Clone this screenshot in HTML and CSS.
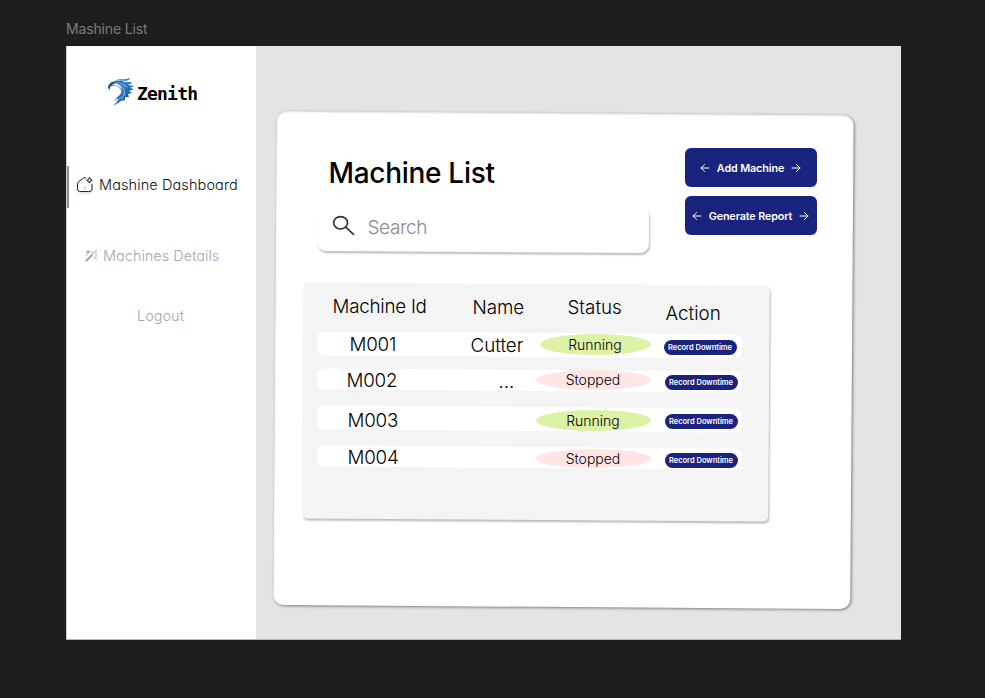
FILE: index.html
```html
<!DOCTYPE html>
<html lang="en">
<head>
<meta charset="utf-8">
<title>Mashine List</title>
<link rel="stylesheet" href="styles.css">
</head>
<body>
<div class="frame-label">Mashine List</div>
<div class="frame">
  <aside class="sidebar">
    <div class="logo">
      <svg class="bird" viewBox="0 0 28 29">
        <defs><linearGradient id="feather" x1="0" y1="0" x2="1" y2="1"><stop offset="0" stop-color="#12385f"/><stop offset=".45" stop-color="#2f80cc"/><stop offset="1" stop-color="#0b2f7c"/></linearGradient></defs>
        <path fill="url(#feather)" d="M1 10C1 6 4 4 8 3C13 0 18 2 23 0C22 3 18 3 15 4C19 5 23 3 25 5C24 6 22 6 21 7L27 8L23 10L27 11L22 13L25 15L21 16L22 19L18 19L18 22L14 23L11 25L6 28C9 25 11 22 11 20L7 23C10 18 16 16 14 12C12 9 9 7 5 8C3 8 3 10 3 12Z"/>
        <path fill="none" stroke="#d8efff" stroke-width=".5" d="M8 5C13 4 17 7 20 9M12 7C17 9 18 12 17 17M14 22L18 15M9 25L14 19"/>
        <path fill="none" stroke="#b8e4ff" stroke-width=".8" d="M9 3Q14 2 19 2"/>
        <path fill="#e4f4ff" d="M5 7Q8 4.500 12 6.500Q15 9 15 12Q12 7.500 5 7Z"/>
      </svg>
      <span class="brand">Zenith</span>
    </div>
    <nav class="nav">
      <a class="item active">
        <svg class="home" viewBox="0 0 18 18"><path d="M10 2.2C8.6 1.3 7.8 1.7 6.7 2.5L3 5.4C1.8 6.4 1.5 7.3 1.5 8.6V12.4C1.5 14.7 2.6 15.6 4.7 15.6H12.6C15 15.6 16 14.5 16 12.4V8.5"/><path stroke="#bbb" d="M9 10.5V12.5"/><path d="M13.5 1.500Q13.700 4 16.2 4.3Q13.8 4.6 13.5 7Q13.1 4.6 10.8 4.3Q13.1 4 13.5 1.500Z"/></svg>
        <span>Mashine Dashboard</span>
      </a>
      <a class="item details">
        <svg class="wand" viewBox="0 0 13 13"><path stroke-width="2.200" d="M1.5 11.5L7 6"/><path stroke-width="1.3" d="M3 1.500V4.4M1.500 3H4.500"/><path stroke="#c9cbd1" stroke-width="1.500" d="M7.5 5.5L11.5 1.5M6 2.5L8 4M11 4.5V7.5M9 8L11.500 10.500M1 6H2"/></svg>
        <span>Machines Details</span>
      </a>
      <a class="item logout"><span>Logout</span></a>
    </nav>
  </aside>
  <main class="main">
    <section class="card">
      <header class="head">
        <div class="head-left">
          <h1>Machine List</h1>
          <div class="search">
            <svg viewBox="0 0 24 22"><ellipse cx="8.6" cy="7.8" rx="7" ry="6.2"/><path d="M13.8 12.2L21.500 19.4"/></svg>
            <span>Search</span>
          </div>
        </div>
        <div class="buttons">
          <button class="btn"><svg viewBox="0 0 10 10"><path d="M9 5H1M4.6 1.4L1 5L4.6 8.6"/></svg><span>Add Machine</span><svg viewBox="0 0 10 10"><path d="M1 5H9M5.4 1.4L9 5L5.4 8.6"/></svg></button>
          <button class="btn"><svg viewBox="0 0 10 10"><path d="M9 5H1M4.6 1.4L1 5L4.6 8.6"/></svg><span>Generate Report</span><svg viewBox="0 0 10 10"><path d="M1 5H9M5.4 1.4L9 5L5.4 8.6"/></svg></button>
        </div>
      </header>
      <section class="table">
        <div class="row titles"><span class="id">Machine Id</span><span class="name">Name</span><span class="col-status">Status</span><span class="col-action">Action</span></div>
        <div class="row r1"><span class="id">M001</span><span class="name">Cutter</span><span class="status running">Running</span><button class="record">Record Downtime</button></div>
        <div class="row r2"><span class="id">M002</span><span class="name">...</span><span class="status stopped">Stopped</span><button class="record">Record Downtime</button></div>
        <div class="row r3"><span class="id">M003</span><span class="name"></span><span class="status running">Running</span><button class="record">Record Downtime</button></div>
        <div class="row r4"><span class="id">M004</span><span class="name"></span><span class="status stopped">Stopped</span><button class="record">Record Downtime</button></div>
      </section>
    </section>
  </main>
</div>
</body>
</html>
```

FILE: styles.css
```css
* { box-sizing: border-box; }
body {
  margin: 0;
  padding: 20px 84px 58px 66px;
  height: 698px;
  overflow: hidden;
  background: #1e1e1e;
  font-family: Inter, "Liberation Sans", sans-serif;
  color: #000;
}
svg { flex: none; fill: none; stroke: currentColor; stroke-linecap: round; stroke-linejoin: round; }
button { border: 0; padding: 0; font-family: inherit; color: #fff; background: #1a237e; }
.frame-label { height: 26px; line-height: 18px; font-size: 14px; letter-spacing: -.15px; color: #7b7b7b; }
.frame { display: flex; width: 835px; height: 594px; background: #e4e4e4; border: solid #b5b5b5; border-width: 0 0 1px; }
.sidebar { width: 190px; background: #fff; border-left: 1px solid #ccc; }

.logo { display: flex; height: 120px; padding: 32px 0 0 40px; }
.bird { width: 28px; height: 29px; stroke: none; }
.brand { margin: 3px 0 0 2px; font: bold 18px/26px "DejaVu Sans Mono", monospace; letter-spacing: -.8px; }

.nav { display: flex; flex-direction: column; font-weight: 300; font-feature-settings: "cv11"; color: #a4a7b0; }
.item { display: flex; align-items: center; font-size: 14.5px; white-space: nowrap; }
.active { height: 42px; border-left: 2px solid #8b8fa8; padding: 0 0 5px 7px; color: #111; letter-spacing: .1px; }
.home { width: 18px; height: 18px; margin-right: 5px; stroke-width: 1; filter: drop-shadow(0 2px 1px #0003); }
.details { height: 20px; margin: 37px 0 0 18px; }
.wand { width: 13px; height: 13px; margin-right: 5px; }
.logout { height: 20px; margin: 40px 0 0 70px; }

.main { flex: 1; padding: 67px 0 0 18.5px; }
.card, .table, .row, .search { position: relative; isolation: isolate; }
.card::before, .table::before, .row::before, .search::before {
  content: "";
  position: absolute;
  inset: 0;
  z-index: -1;
  transform: rotate(.4deg);
}
.card { width: 577px; height: 494px; padding: 35px 35px 0 42px; }
.card::before { background: #fff; border-radius: 10px; box-shadow: 1px 1px 3px #0007, inset 0 1px 2px #0002; }
.head { display: flex; justify-content: space-between; height: 136px; }
h1 { margin: 7px 0 0 12px; font-size: 28px; line-height: 36px; font-weight: 500; letter-spacing: -.3px; white-space: nowrap; }
.search { display: flex; align-items: center; width: 332px; height: 46px; margin-top: 15px; padding-left: 15px; color: #8a8a8a; font-size: 19px; font-weight: 300; letter-spacing: -.4px; }
.search::before { border-radius: 9px; background: #fff; box-shadow: 1px 2px 2px #0004; clip-path: inset(4px -4px -5px -1px); }
.search svg { width: 24px; height: 22px; margin: -6px 12px 0 0; color: #333; stroke-width: 1.7; }
.search span { margin-top: -3px; }
.buttons { width: 132px; display: flex; flex-direction: column; gap: 9px; }
.btn { display: flex; align-items: center; justify-content: center; gap: 7px; height: 39px; border-radius: 6px; font-size: 10.8px; font-weight: 600; letter-spacing: -.13px; white-space: nowrap; }
.btn span { margin-top: 1px; }
.btn svg { width: 10px; height: 10px; stroke-width: 1; }

.table { width: 466px; height: 236px; margin-left: -14px; padding: 6px 27px 0 14px; font-weight: 300; }
.table::before { background: #f4f4f4; border-radius: 5px; box-shadow: 1px 2px 2px #0004; }
.row { display: grid; grid-template-columns: 130px 89px 125px 1fr; align-items: center; font-size: 18.8px; line-height: 24px; white-space: nowrap; }
.row::before { background: #fff; border-radius: 7px; }
.titles { height: 43px; padding-bottom: 7px; }
.titles::before { content: none; }
.titles .id { padding-left: 16px; margin-top: -2px; letter-spacing: -.25px; }
.titles .name { padding-left: 26px; letter-spacing: -.1px; }
.col-status { padding-left: 32px; }
.col-action { padding-left: 5px; margin-top: 12px; }
.status { display: grid; place-items: center; width: 115px; height: 21px; border-radius: 50%; font-size: 14px; line-height: 20px; }
.running { background: #dcf2a5; }
.stopped { background: #ffe6e5; }
.record { width: 73px; height: 15px; margin-left: 4px; border-radius: 7.5px; font-size: 7.5px; line-height: 15px; font-weight: 600; }
.r1 { height: 24px; }
.r1 .id { padding-left: 33px; margin-top: -1px; letter-spacing: -.2px; }
.r1 .name { padding-left: 24px; margin-top: 1px; }
.r1 .status { width: 111px; margin: -2px 0 0 4px; }
.r1 .record { margin: 3px 0 0 3px; }
.r2 { height: 21px; margin-top: 13px; }
.r2 .id { padding-left: 30px; margin-top: -3px; letter-spacing: -.2px; }
.r2 .name { padding-left: 52px; }
.r2 .status { height: 20px; margin-top: -4px; }
.r2 .record { margin-top: 1px; }
.r3 { height: 24px; margin-top: 16px; }
.r3 .id, .r4 .id { padding-left: 31px; letter-spacing: -.2px; }
.r3 .id { margin-top: 2px; }
.r3 .status { margin-top: 1px; }
.r3 .record { margin-top: 3px; }
.r4 { height: 21px; margin-top: 16px; }
.r4 .id { margin-top: -1px; }
.r4 .status { height: 19px; margin-top: -1px; }
.r4 .record { margin-top: 3px; }
```
